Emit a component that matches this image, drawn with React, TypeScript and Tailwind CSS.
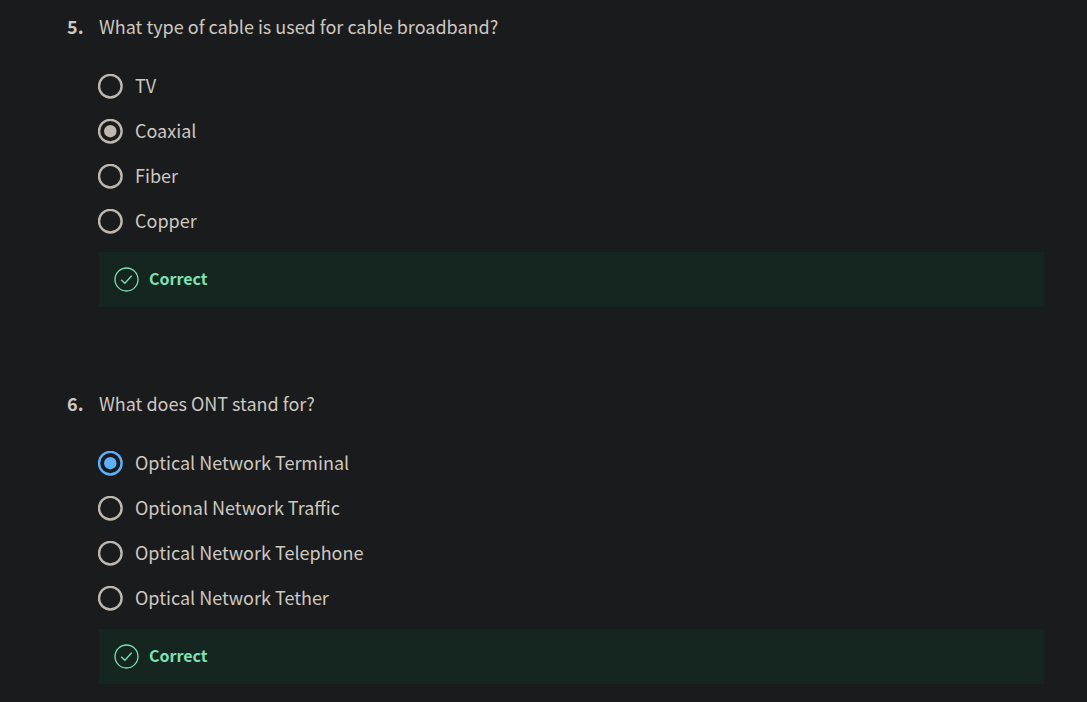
import { useState } from "react";

type Question = {
  number: number;
  prompt: string;
  options: string[];
  answer: string;
  highlighted: boolean;
};

const questions: Question[] = [
  {
    number: 5,
    prompt: "What type of cable is used for cable broadband?",
    options: ["TV", "Coaxial", "Fiber", "Copper"],
    answer: "Coaxial",
    highlighted: false,
  },
  {
    number: 6,
    prompt: "What does ONT stand for?",
    options: [
      "Optical Network Terminal",
      "Optional Network Traffic",
      "Optical Network Telephone",
      "Optical Network Tether",
    ],
    answer: "Optical Network Terminal",
    highlighted: true,
  },
];

function CheckCircle() {
  return (
    <svg viewBox="0 0 25 25" className="size-[25px] shrink-0" fill="none" stroke="currentColor" aria-hidden="true">
      <circle cx="12.5" cy="12.5" r="11.5" strokeWidth="1.3" />
      <path d="M7.2 12.7 L10.9 16.3 L17.7 8.7" strokeWidth="1.3" />
    </svg>
  );
}

function RadioMark({ checked }: { checked: boolean }) {
  return (
    <svg
      viewBox="0 0 25 25"
      className="pointer-events-none col-start-1 row-start-1 size-[25px]"
      fill="none"
      aria-hidden="true"
    >
      <circle cx="12.3" cy="12.2" r="11.3" stroke="currentColor" strokeWidth="2.4" />
      {checked && <circle cx="12.3" cy="12.2" r="6.2" fill="currentColor" />}
    </svg>
  );
}

function QuestionBlock({ question }: { question: Question }) {
  const [selected, setSelected] = useState(question.answer);

  return (
    <li className="flex">
      <span className="w-8 shrink-0 font-bold">{question.number}.</span>
      <fieldset className="min-w-0 grow">
        <legend>{question.prompt}</legend>
        <div className="-ml-px mt-6">
          {question.options.map((option) => {
            const checked = selected === option;
            return (
              <label key={option} className="flex h-[45px] cursor-pointer items-center gap-3">
                <span
                  className={`grid size-[25px] shrink-0 ${
                    checked && question.highlighted ? "text-[#5cb0ff]" : "text-[#bdb7af]"
                  }`}
                >
                  <input
                    type="radio"
                    name={`question-${question.number}`}
                    checked={checked}
                    onChange={() => setSelected(option)}
                    className="col-start-1 row-start-1 size-[25px] appearance-none rounded-full outline-none"
                  />
                  <RadioMark checked={checked} />
                </span>
                <span className="pb-1">{option}</span>
              </label>
            );
          })}
        </div>
        {selected === question.answer && (
          <div className="mt-2 flex h-[55px] items-center gap-[10px] bg-[#152621] px-[15px] text-base font-bold text-[#7fe0b2]">
            <CheckCircle />
            <span className="pb-1">Correct</span>
          </div>
        )}
      </fieldset>
    </li>
  );
}

export default function App() {
  return (
    <main className="min-h-screen bg-[#1a1b1c] pt-3 pr-[43px] pb-4 pl-[67px] font-['Noto_Sans_CJK_SC',sans-serif] text-[18px] leading-7 text-[#cdc8c0]">
      <ol className="flex flex-col gap-[82px]">
        {questions.map((question) => (
          <QuestionBlock key={question.number} question={question} />
        ))}
      </ol>
    </main>
  );
}
